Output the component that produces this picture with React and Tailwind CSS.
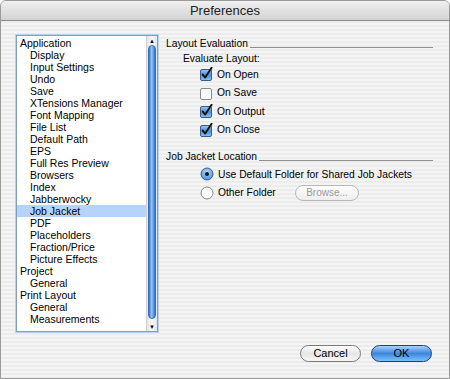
import React from 'react';

const items = [
  ['Application', 0], ['Display', 1], ['Input Settings', 1], ['Undo', 1], ['Save', 1],
  ['XTensions Manager', 1], ['Font Mapping', 1], ['File List', 1], ['Default Path', 1], ['EPS', 1],
  ['Full Res Preview', 1], ['Browsers', 1], ['Index', 1], ['Jabberwocky', 1], ['Job Jacket', 1],
  ['PDF', 1], ['Placeholders', 1], ['Fraction/Price', 1], ['Picture Effects', 1], ['Project', 0],
  ['General', 1], ['Print Layout', 0], ['General', 1], ['Measurements', 1],
];

const Checkbox = ({ checked }) => (
  <svg width="14" height="14" viewBox="0 0 14 14" className="shrink-0">
    <defs>
      <linearGradient id="cbBlue" x1="0" y1="0" x2="0" y2="1">
        <stop offset="0" stopColor="#9cc8f4" />
        <stop offset="0.5" stopColor="#4a90dc" />
        <stop offset="1" stopColor="#8cc4f8" />
      </linearGradient>
      <linearGradient id="cbWhite" x1="0" y1="0" x2="0" y2="1">
        <stop offset="0" stopColor="#f4f4f4" />
        <stop offset="1" stopColor="#ffffff" />
      </linearGradient>
    </defs>
    <rect x="1.5" y="2.5" width="11" height="11" rx="1.5" fill={checked ? 'url(#cbBlue)' : 'url(#cbWhite)'} stroke={checked ? '#3a5f8c' : '#8a8a8a'} />
    {checked && <path d="M3.8 7.6 L6.2 10.6 L12.6 0.8" fill="none" stroke="#111" strokeWidth="1.9" strokeLinecap="round" strokeLinejoin="round" />}
  </svg>
);

const Radio = ({ on }) => (
  <svg width="14" height="14" viewBox="0 0 14 14" className="shrink-0">
    <defs>
      <radialGradient id="rdBlue" cx="0.5" cy="0.35" r="0.7">
        <stop offset="0" stopColor="#b8dcfc" />
        <stop offset="1" stopColor="#3f86d8" />
      </radialGradient>
    </defs>
    <circle cx="7" cy="7" r="6" fill={on ? 'url(#rdBlue)' : '#fafafa'} stroke={on ? '#3a5f8c' : '#8a8a8a'} />
    {on && <circle cx="7" cy="7" r="2" fill="#111" />}
  </svg>
);

const Row = ({ children }) => <div className="flex items-center gap-[4px] h-[18.5px] whitespace-nowrap">{children}</div>;

export default function App() {
  return (
    <div
      className="w-[450px] h-[379px] overflow-hidden flex flex-col rounded-t-[6px] border border-[#9a9a9a] text-[10.3px] text-black bg-[repeating-linear-gradient(to_bottom,#ececec_0px,#ececec_2px,#f4f4f4_2px,#f4f4f4_4px)]"
      style={{ fontFamily: '"Liberation Sans", Arial, sans-serif' }}
    >
      <div className="h-[20px] shrink-0 flex items-center justify-center border-b border-[#8c8c8c] bg-[linear-gradient(to_bottom,#f0f0f0,#d2d2d2)] text-[13px] text-[#222]">
        Preferences
      </div>

      <div className="flex flex-1 pt-[14px] pl-[15px]">
        <div className="w-[142px] h-[297px] shrink-0 border border-[#7f9fc0] shadow-[0_0_0_1px_#b9d2ee] bg-white flex">
          <div className="flex-1 pt-[1px]">
            {items.map(([t, lvl], i) => (
              <div
                key={i}
                className={`h-[12px] leading-[12px] text-[10.5px] ${lvl ? 'pl-[13px]' : 'pl-[3px]'} ${t === 'Job Jacket' ? 'bg-[#b5d3fb]' : ''}`}
              >
                {t}
              </div>
            ))}
          </div>
          <div className="w-[11px] flex flex-col border-l border-[#d0d0d0] bg-[linear-gradient(to_right,#e4e4e4,#fafafa,#e4e4e4)]">
            <div className="h-[9px] flex items-center justify-center text-[6px] leading-none">▲</div>
            <div className="h-[274px] mx-[1px] rounded-full border border-[#3b6fb8] bg-[linear-gradient(to_right,#2f6fd0,#9ccaf8_45%,#5e9ee8_70%,#2f6fd0)]" />
            <div className="flex-1" />
            <div className="h-[9px] flex items-center justify-center text-[6px] leading-none">▼</div>
          </div>
        </div>

        <div className="flex-1 pl-[8px] pr-[16px]">
          <div className="flex items-end gap-[2px] h-[14px]">
            <span className="leading-none">Layout Evaluation</span>
            <div className="flex-1 h-[1px] bg-[#8f8f8f] mb-[1px]" />
          </div>
          <div className="pl-[17px] mt-[3px] leading-[14px]">Evaluate Layout:</div>
          <div className="pl-[33px] mt-[-1px]">
            <Row><Checkbox checked /><span>On Open</span></Row>
            <Row><Checkbox /><span>On Save</span></Row>
            <Row><Checkbox checked /><span>On Output</span></Row>
            <Row><Checkbox checked /><span>On Close</span></Row>
          </div>

          <div className="flex items-end gap-[2px] h-[14px] mt-[9px]">
            <span className="leading-none">Job Jacket Location</span>
            <div className="flex-1 h-[1px] bg-[#8f8f8f] mb-[1px]" />
          </div>
          <div className="pl-[34px] mt-[3px]">
            <Row><Radio on /><span>Use Default Folder for Shared Job Jackets</span></Row>
            <Row>
              <Radio /><span className="w-[73px]">Other Folder</span>
              <div className="w-[64px] h-[16px] rounded-full border border-[#b8b8b8] bg-[linear-gradient(to_bottom,#fdfdfd,#eeeeee)] flex items-center justify-center text-[10px] text-[#9a9a9a]">
                Browse...
              </div>
            </Row>
          </div>
        </div>
      </div>

      <div className="h-[46px] shrink-0 flex justify-end items-start gap-[10px] pr-[17px] pt-[13px]">
        <button className="w-[61px] h-[17px] rounded-full border border-[#7a7a7a] bg-[linear-gradient(to_bottom,#ffffff,#e6e6e6_50%,#f6f6f6)] text-[11px] leading-none">
          Cancel
        </button>
        <button className="w-[61px] h-[17px] rounded-full border border-[#1e3f7a] bg-[linear-gradient(to_bottom,#a9d2fa,#3c87dc_50%,#7cc0f8)] text-[11px] leading-none">
          OK
        </button>
      </div>
    </div>
  );
}
